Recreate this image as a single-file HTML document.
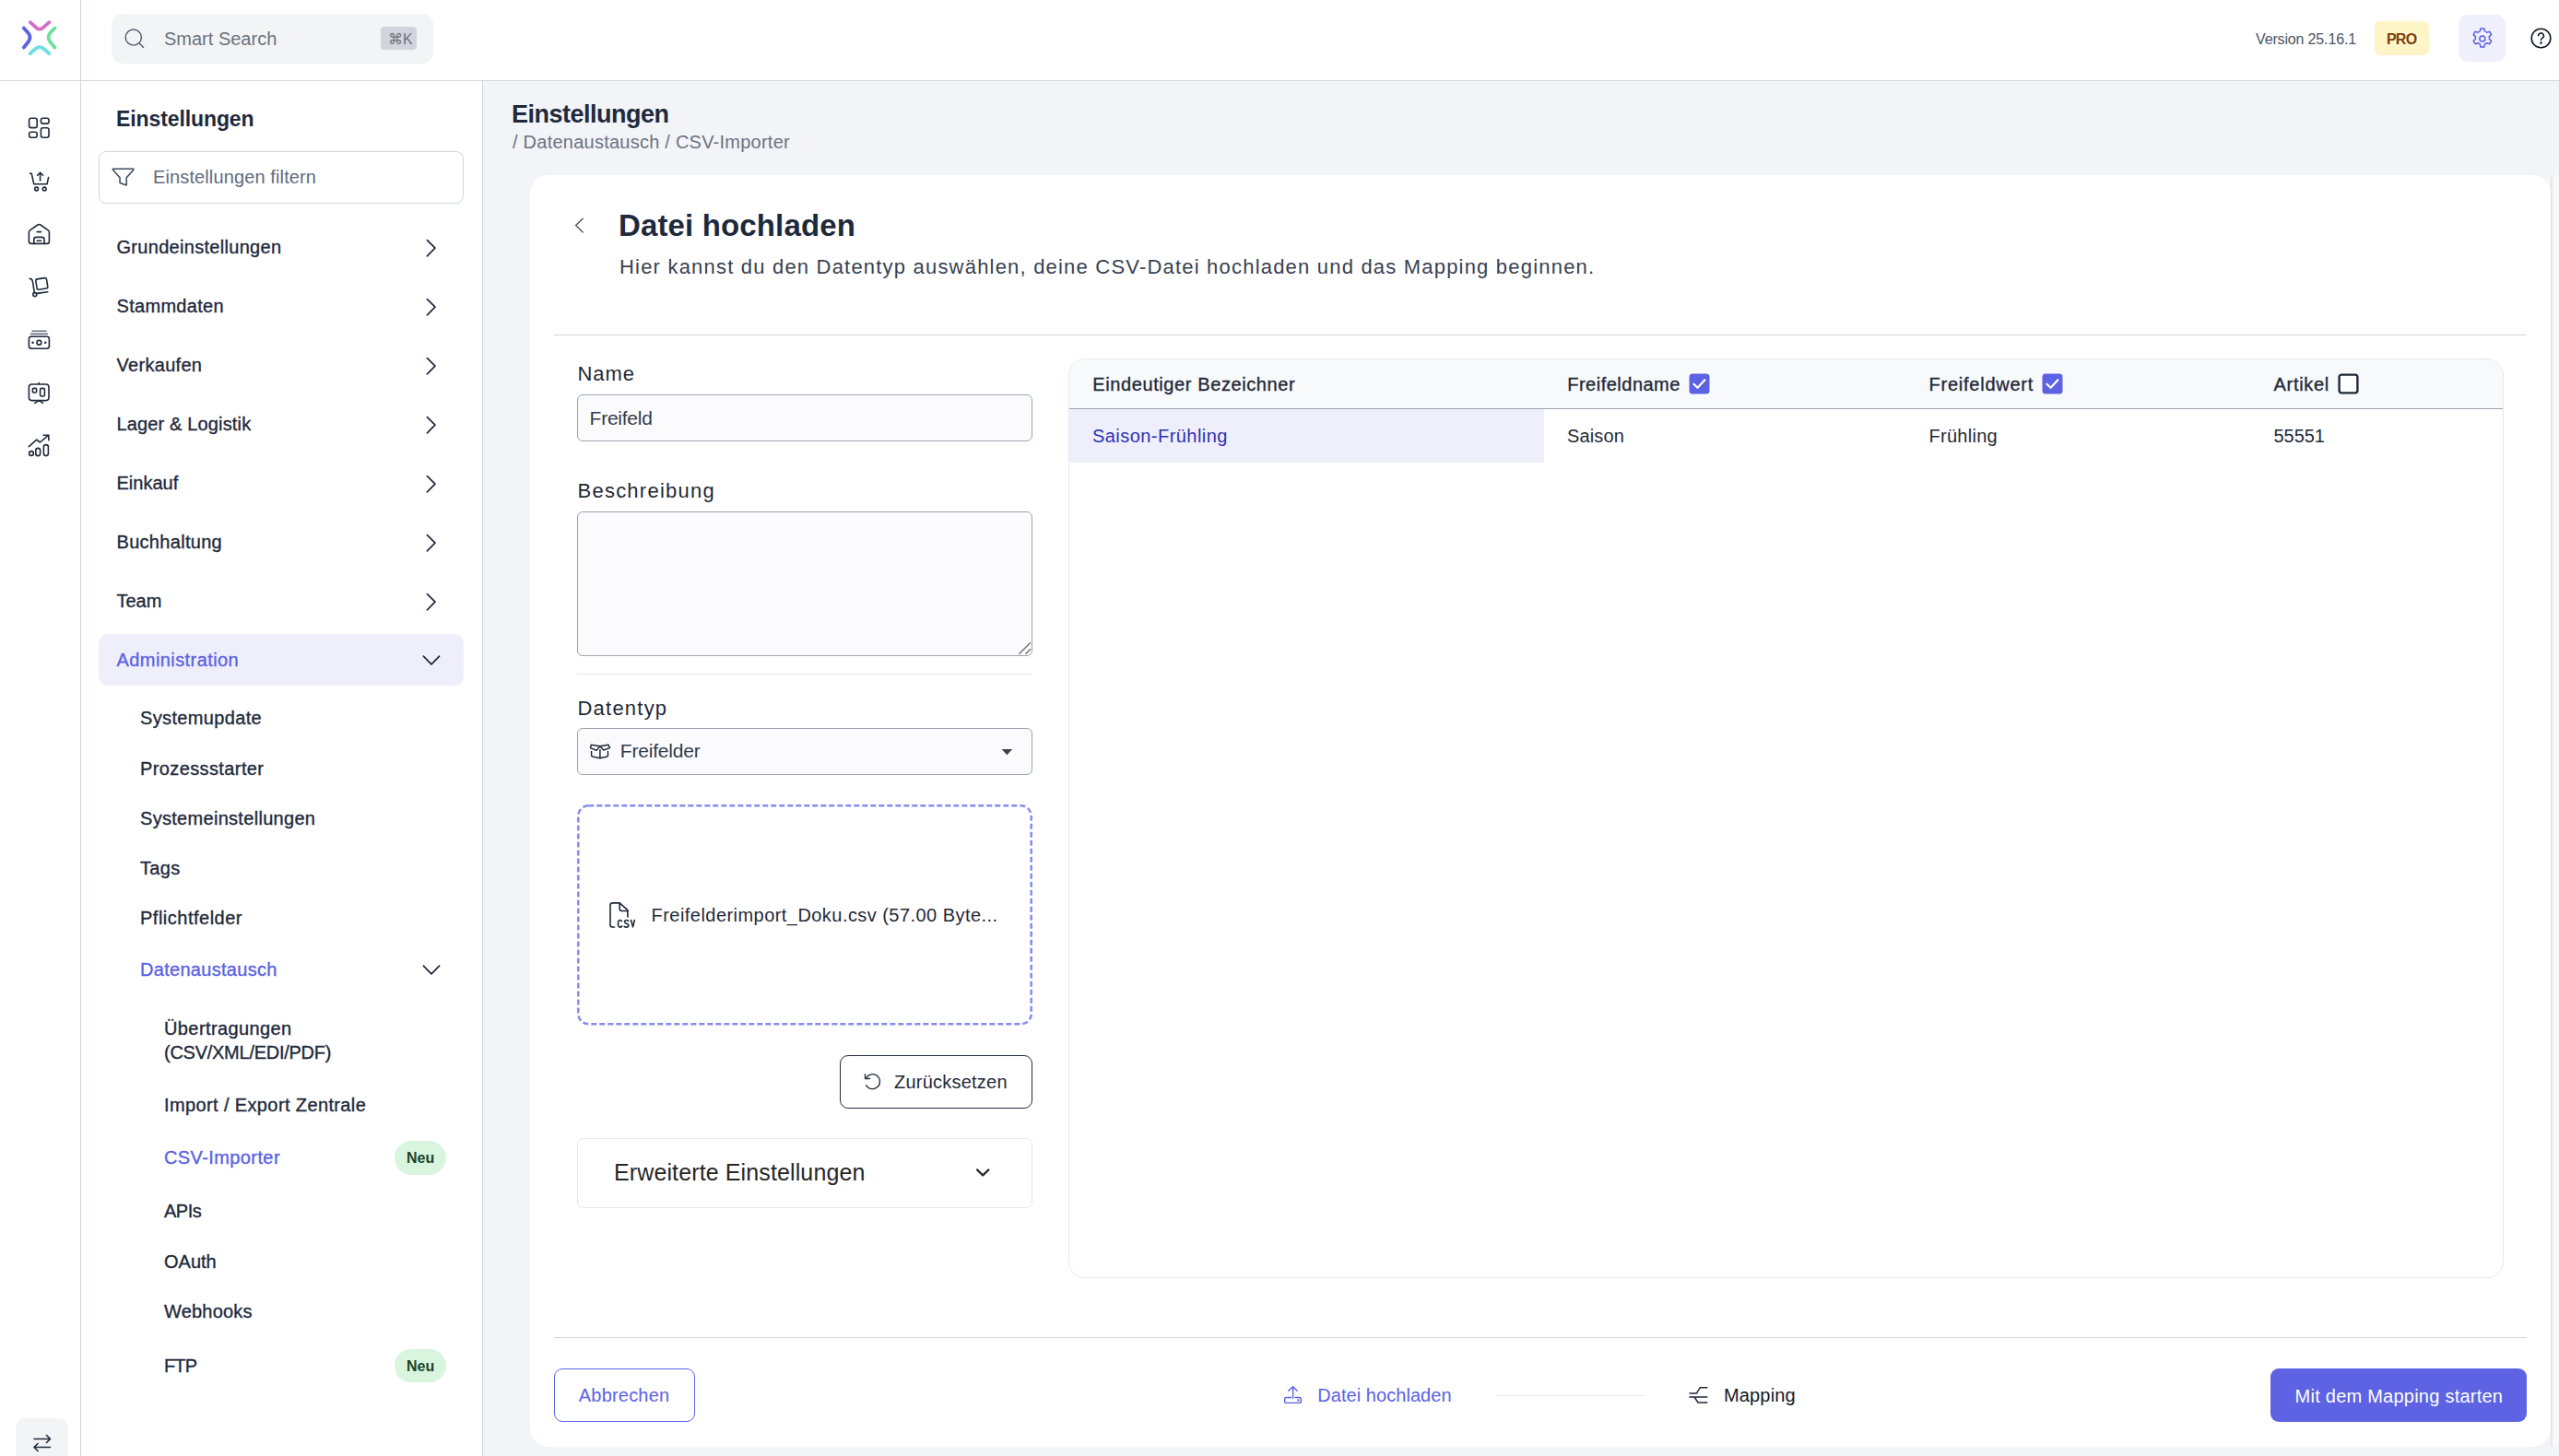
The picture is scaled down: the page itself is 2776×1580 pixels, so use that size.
<!DOCTYPE html>
<html lang="de">
<head>
<meta charset="utf-8">
<title>Datei hochladen</title>
<style>
*{box-sizing:border-box;margin:0;padding:0}
html,body{width:2776px;height:1580px;overflow:hidden}
body{position:relative;background:#f3f4f8;font-family:"Liberation Sans",sans-serif;color:#1e293b}
.a{position:absolute}
.t{position:absolute;white-space:nowrap;line-height:1}
.med{-webkit-text-stroke:0.35px currentColor}
svg{position:absolute;overflow:visible}
</style>
</head>
<body>

<!-- ===== Header ===== -->
<div class="a" style="left:0;top:0;width:2776px;height:87px;background:#fff"></div>
<div class="a" style="left:0;top:87px;width:2776px;height:1px;background:#d1d5db"></div>
<!-- logo -->
<svg style="left:0;top:0" width="87" height="87" viewBox="0 0 87 87" fill="none" stroke-width="3.8" stroke-linecap="round">
  <path d="M32.8 24.2 Q38 29 40 30.6 Q43 32.6 46 30.6 Q48 29 53.4 24.2" stroke="#d66fc3"/>
  <path d="M25.8 30.5 Q29 34 31 36.2 Q34 40.6 31 45 Q29 47.5 25.8 51.5" stroke="#5b62e3"/>
  <path d="M59.4 30.5 Q56 34 54 36.2 Q51.2 40.6 54 45 Q56 47.5 59.4 51.5" stroke="#6ce09c"/>
  <path d="M32.6 58.2 Q38 53 40 52 Q43 50.2 46 52 Q48 53 53.4 58.2" stroke="#6de0e0"/>
</svg>
<!-- search -->
<div class="a" style="left:121px;top:15px;width:349px;height:54px;background:#f3f4f6;border-radius:12px"></div>
<svg style="left:135px;top:31px" width="23" height="23" viewBox="0 0 23 23" fill="none" stroke="#525c6b" stroke-width="1.45" stroke-linecap="round">
  <circle cx="9.8" cy="9.5" r="8.6"/><path d="M16 15.8 L20.6 20.6"/>
</svg>
<div class="t" style="left:178px;top:31.7px;font-size:20px;color:#6b7280">Smart Search</div>
<div class="a" style="left:413px;top:29px;width:39px;height:25px;background:#d1d5db;border-radius:4px"></div>
<div class="t" style="left:420.5px;top:34.6px;font-size:16px;color:#6b7280;letter-spacing:0.6px">⌘K</div>
<!-- right header -->
<div class="t" style="left:2447px;top:35.2px;font-size:16px;color:#4b5563;letter-spacing:-0.15px">Version 25.16.1</div>
<div class="a" style="left:2576px;top:23px;width:59px;height:37px;background:#fef5c6;border-radius:6px"></div>
<div class="t" style="left:2589px;top:35.2px;font-size:16px;color:#7a3e10;font-weight:700;letter-spacing:-0.8px">PRO</div>
<div class="a" style="left:2667px;top:16px;width:51px;height:51px;background:#eff0fc;border-radius:10px"></div>
<svg style="left:2678.5px;top:27.7px" width="27.8" height="27.8" viewBox="0 0 24 24" fill="none" stroke="#5b62e3" stroke-width="1.3" stroke-linejoin="round">
  <path d="M10.3 2.5 h3.4 l.5 2.6 a7.5 7.5 0 0 1 2 1.15 l2.5-.9 1.7 2.95 -2 1.75 a7.5 7.5 0 0 1 0 2.3 l2 1.75 -1.7 2.95 -2.5-.9 a7.5 7.5 0 0 1 -2 1.15 l-.5 2.6 h-3.4 l-.5-2.6 a7.5 7.5 0 0 1 -2-1.15 l-2.5.9 -1.7-2.95 2-1.75 a7.5 7.5 0 0 1 0-2.3 l-2-1.75 1.7-2.95 2.5.9 a7.5 7.5 0 0 1 2-1.15 z"/>
  <circle cx="12" cy="12" r="2.6"/>
</svg>
<svg style="left:2745px;top:30px" width="23" height="23" viewBox="0 0 23 23" fill="none" stroke="#111827" stroke-width="1.6" stroke-linecap="round">
  <circle cx="11.5" cy="11.5" r="10.3"/><path d="M8.6 8.8 a2.9 2.9 0 1 1 4.2 2.6 c-.9.5-1.3 1-1.3 2"/><circle cx="11.5" cy="16.6" r=".5" fill="#111827"/>
</svg>

<!-- ===== Left rail ===== -->
<div class="a" style="left:0;top:88px;width:87px;height:1492px;background:#fff"></div>
<div class="a" style="left:87px;top:0;width:1px;height:1580px;background:#d1d5db"></div>
<svg style="left:0;top:88px" width="87" height="1492" viewBox="0 88 87 1492" fill="none" stroke="#1e293b" stroke-width="1.6" stroke-linecap="round" stroke-linejoin="round">
  <!-- dashboard -->
  <rect x="31.6" y="128.2" width="8.6" height="10.4" rx="2.2"/>
  <rect x="44.4" y="128.2" width="8.6" height="5.9" rx="2.2"/>
  <rect x="31.6" y="143.2" width="8.6" height="6.1" rx="2.2"/>
  <rect x="44.4" y="138.8" width="8.6" height="10.5" rx="2.2"/>
  <!-- cart upload -->
  <path d="M32.4 188.2 h1.8 l2.6 11.6 h14.2 l1.6-7.2"/>
  <path d="M43.6 196 v-8.6 M40.6 190.2 l3-3 3 3"/>
  <circle cx="39.6" cy="205" r="1.9"/><circle cx="48.2" cy="205" r="1.9"/>
  <!-- warehouse -->
  <path d="M31.4 262 V251.8 a2.4 2.4 0 0 1 1.1-2 l8.4-5.8 a2.6 2.6 0 0 1 3 0 l8.4 5.8 a2.4 2.4 0 0 1 1.1 2 V262 a2.4 2.4 0 0 1-2.4 2.4 h-17.2 a2.4 2.4 0 0 1-2.4-2.4z"/>
  <path d="M36.8 264.4 v-4.4 a2.6 2.6 0 0 1 2.6-2.6 h6 a2.6 2.6 0 0 1 2.6 2.6 v4.4 M40.2 261.2 h4.4 M40.2 251.6 h4.4"/>
  <!-- trolley -->
  <path d="M32.2 302.4 q2.6 0 3.2 3 l2 12.4 M40.4 318.4 l11.4-1.6"/>
  <circle cx="37.8" cy="319.6" r="2"/>
  <rect x="39.4" y="302.2" width="11.8" height="11.5" rx="1.8" transform="rotate(-9 45.3 308)"/>
  <!-- money -->
  <path d="M35 359.2 h15 M33.6 362.4 h17.8" stroke="#6b7280"/>
  <rect x="31.4" y="365.2" width="22" height="13" rx="2.6"/>
  <circle cx="42.4" cy="371.7" r="2.4"/>
  <circle cx="35.6" cy="371.7" r=".5" fill="#1e293b"/><circle cx="49.2" cy="371.7" r=".5" fill="#1e293b"/>
  <!-- kiosk -->
  <rect x="31.4" y="417" width="21.6" height="17.6" rx="3"/>
  <path d="M42.2 416.2 v-.6"/>
  <rect x="35.4" y="421.4" width="4.2" height="4.6" rx="1"/>
  <rect x="43.6" y="421.4" width="4.8" height="8.6" rx="1.6"/>
  <path d="M37.8 437.4 l4.4-2.8 4.4 2.8"/>
  <!-- chart -->
  <path d="M31.2 484.6 l8.6-7.4 3.6 2.8 9.4-7.8 M47.2 472.2 h5.6 v5.6"/>
  <circle cx="34" cy="492" r="2.4"/>
  <rect x="38.8" y="486.4" width="4.8" height="8.2" rx="2.4"/>
  <rect x="47.4" y="482.6" width="5" height="12" rx="2.5"/>
</svg>
<!-- bottom toggle -->
<div class="a" style="left:17px;top:1539px;width:57px;height:60px;background:#f3f4f6;border-radius:10px"></div>
<svg style="left:35px;top:1555px" width="22" height="22" viewBox="0 0 22 22" fill="none" stroke="#1e293b" stroke-width="1.6" stroke-linecap="round" stroke-linejoin="round">
  <path d="M2 6.5 h17.5 M15.5 2.5 l4 4 -4 4 M19.5 15.5 h-17.5 M6 11.5 l-4 4 4 4"/>
</svg>

<!-- ===== Settings sidebar ===== -->
<div class="a" style="left:88px;top:88px;width:435px;height:1492px;background:#fff"></div>
<div class="a" style="left:523px;top:88px;width:1px;height:1492px;background:#d1d5db"></div>
<div class="t" style="left:126px;top:117.9px;font-size:23px;font-weight:700;color:#1e293b;letter-spacing:-0.1px">Einstellungen</div>
<div class="a" style="left:107px;top:164px;width:396px;height:57px;border:1px solid #d1d5db;border-radius:8px;background:#fff"></div>
<svg style="left:121.5px;top:180.5px" width="24" height="22" viewBox="0 0 24 22" fill="none" stroke="#3f4a5c" stroke-width="1.55" stroke-linejoin="round">
  <path d="M1.6 2.2 h20.8 a.6.6 0 0 1 .45 1 l-7.6 8.6 v8.2 l-7.2 -2.6 v-5.6 l-7.6-8.6 a.6.6 0 0 1 .45-1z"/>
</svg>
<div class="t" style="left:166px;top:181.8px;font-size:20px;color:#5f6b7d;letter-spacing:0.12px">Einstellungen filtern</div>
<!-- active admin bg -->
<div class="a" style="left:107px;top:688px;width:396px;height:56px;background:#efeffb;border-radius:10px"></div>
<div style="position:absolute;left:0;top:0;font-size:20px;letter-spacing:0.3px;color:#1e293b">
  <div class="t med" style="left:126.5px;top:257.8px">Grundeinstellungen</div>
  <div class="t med" style="left:126.5px;top:321.8px">Stammdaten</div>
  <div class="t med" style="left:126.5px;top:385.8px">Verkaufen</div>
  <div class="t med" style="left:126.5px;top:449.8px;letter-spacing:0.15px">Lager &amp; Logistik</div>
  <div class="t med" style="left:126.5px;top:513.8px;letter-spacing:0">Einkauf</div>
  <div class="t med" style="left:126.5px;top:577.8px">Buchhaltung</div>
  <div class="t med" style="left:126.5px;top:641.8px;letter-spacing:0">Team</div>
  <div class="t med" style="left:126.5px;top:705.8px;color:#5b62e3;letter-spacing:0.42px">Administration</div>
  <div class="t med" style="left:152px;top:769.1px;letter-spacing:0.35px">Systemupdate</div>
  <div class="t med" style="left:152px;top:823.5px;letter-spacing:0.39px">Prozessstarter</div>
  <div class="t med" style="left:152px;top:877.6px">Systemeinstellungen</div>
  <div class="t med" style="left:152px;top:931.8px">Tags</div>
  <div class="t med" style="left:152px;top:985.8px;letter-spacing:0.5px">Pflichtfelder</div>
  <div class="t med" style="left:152px;top:1042.3px;color:#5b62e3">Datenaustausch</div>
  <div class="t med" style="left:178px;top:1105.8px;letter-spacing:0.4px">Übertragungen</div>
  <div class="t med" style="left:178px;top:1132.3px;letter-spacing:-0.26px">(CSV/XML/EDI/PDF)</div>
  <div class="t med" style="left:178px;top:1188.6px;letter-spacing:0.38px">Import / Export Zentrale</div>
  <div class="t med" style="left:178px;top:1245.5px;color:#5b62e3;letter-spacing:0.4px">CSV-Importer</div>
  <div class="t med" style="left:178px;top:1303.8px;letter-spacing:-0.5px">APIs</div>
  <div class="t med" style="left:178px;top:1358.7px;letter-spacing:0">OAuth</div>
  <div class="t med" style="left:178px;top:1413.1px;letter-spacing:0.2px">Webhooks</div>
  <div class="t med" style="left:178px;top:1472.1px;letter-spacing:-0.9px">FTP</div>
</div>
<svg style="left:0;top:0" width="523" height="1580" viewBox="0 0 523 1580" fill="none" stroke="#1e293b" stroke-width="1.7" stroke-linecap="round" stroke-linejoin="round">
  <path d="M463.4 260.6 l8.6 8.6 -8.6 8.6"/>
  <path d="M463.4 324.6 l8.6 8.6 -8.6 8.6"/>
  <path d="M463.4 388.6 l8.6 8.6 -8.6 8.6"/>
  <path d="M463.4 452.6 l8.6 8.6 -8.6 8.6"/>
  <path d="M463.4 516.6 l8.6 8.6 -8.6 8.6"/>
  <path d="M463.4 580.6 l8.6 8.6 -8.6 8.6"/>
  <path d="M463.4 644.6 l8.6 8.6 -8.6 8.6"/>
  <path d="M459.4 712.2 l8.6 8.6 8.6-8.6"/>
  <path d="M459.4 1048.2 l8.6 8.6 8.6-8.6"/>
</svg>
<div class="a" style="left:428px;top:1238px;width:55.5px;height:37px;background:#d9f5de;border-radius:18.5px"></div>
<div class="t" style="left:441px;top:1249.4px;font-size:16px;font-weight:700;color:#17452b">Neu</div>
<div class="a" style="left:428px;top:1464px;width:55.5px;height:35.5px;background:#d9f5de;border-radius:18px"></div>
<div class="t" style="left:441px;top:1474.6px;font-size:16px;font-weight:700;color:#17452b">Neu</div>

<!-- ===== Card ===== -->
<div class="a" style="left:575px;top:190px;width:2192px;height:1380px;background:#fff;border-radius:20px"></div>
<div class="a" style="left:2767px;top:190px;width:9px;height:1380px;background:#f9f9f9;border-left:2px solid #e6e6e6"></div>

<!-- page heading -->
<div class="t" style="left:555px;top:111.1px;font-size:27px;font-weight:700;color:#1e293b;letter-spacing:-0.5px">Einstellungen</div>
<div class="t" style="left:556px;top:144.1px;font-size:20px;color:#6b7280;letter-spacing:0.24px">/ Datenaustausch / CSV-Importer</div>

<!-- card header -->
<svg style="left:620px;top:234px" width="16" height="21" viewBox="0 0 16 21" fill="none" stroke="#4b5563" stroke-width="1.4" stroke-linecap="round" stroke-linejoin="round">
  <path d="M12.2 3.2 L4.6 10.6 L12.2 18"/>
</svg>
<div class="t" style="left:671px;top:228.1px;font-size:33px;font-weight:700;color:#1e293b;letter-spacing:0.14px">Datei hochladen</div>
<div class="t" style="left:672px;top:278.6px;font-size:22px;color:#374151;letter-spacing:1.2px">Hier kannst du den Datentyp auswählen, deine CSV-Datei hochladen und das Mapping beginnen.</div>
<div class="a" style="left:601px;top:363px;width:2140px;height:1px;background:#d1d5db"></div>

<!-- ===== form ===== -->
<div class="t" style="left:626.5px;top:394.7px;font-size:22px;color:#1f2937;letter-spacing:0.9px">Name</div>
<div class="a" style="left:626px;top:428px;width:494px;height:50.6px;border:1px solid #9ca3af;border-radius:6px;background:#fbfbfd"></div>
<div class="t" style="left:639.6px;top:443.2px;font-size:21px;color:#333c4b;letter-spacing:-0.25px">Freifeld</div>

<div class="t" style="left:626.5px;top:522.4px;font-size:22px;color:#1f2937;letter-spacing:1.24px">Beschreibung</div>
<div class="a" style="left:626px;top:555px;width:494px;height:157px;border:1px solid #9ca3af;border-radius:6px;background:#fbfbfd"></div>
<svg style="left:1104px;top:696px" width="16" height="16" viewBox="0 0 16 16" fill="none" stroke="#6b6b6b" stroke-width="1.3" stroke-linecap="butt">
  <path d="M1.4 13.8 L14 1.2 M8.4 13.8 L14 8.2"/>
</svg>
<div class="a" style="left:626px;top:731px;width:494px;height:1px;background:#e5e7eb"></div>

<div class="t" style="left:626.5px;top:758.3px;font-size:22px;color:#1f2937;letter-spacing:1.22px">Datentyp</div>
<div class="a" style="left:626px;top:790px;width:494px;height:50.5px;border:1px solid #9ca3af;border-radius:6px;background:#fbfbfd"></div>
<svg style="left:639px;top:805px" width="24" height="20" viewBox="0 0 24 20" fill="none" stroke="#1f2937" stroke-width="1.5" stroke-linejoin="round" stroke-linecap="round">
  <path d="M1.4 6.6 L2.4 3.2 L11.9 4.8 L20.9 3.2 L22.6 6.6 L15.8 9 L11.9 4.8 L8 9.2 Z"/>
  <path d="M2.6 10.4 V15 Q2.8 15.6 3.6 15.9 L11.9 17.7 L19.6 16 Q20.4 15.7 20.5 15 V10.4 M11.9 8.8 V17.7"/>
</svg>
<div class="t" style="left:672.8px;top:804.4px;font-size:21px;color:#333c4b;letter-spacing:-0.2px">Freifelder</div>
<svg style="left:1085px;top:811px" width="14" height="10" viewBox="0 0 14 10">
  <path d="M1.6 1.9 H13.2 L7.4 8.2 Z" fill="#3a4350"/>
</svg>

<!-- dropzone -->
<svg style="left:626px;top:873px" width="494" height="239.5" viewBox="0 0 494 239.5">
  <rect x="1.3" y="1.3" width="491.4" height="236.9" rx="11" fill="#fff" stroke="#868cee" stroke-width="2.5" stroke-dasharray="6 3"/>
</svg>
<svg style="left:650px;top:970px" width="50" height="45" viewBox="0 0 50 45" fill="none" stroke="#1f2937" stroke-width="1.6" stroke-linejoin="round" stroke-linecap="round">
  <path d="M16.6 36 H14.6 A2.6 2.6 0 0 1 12 33.4 V12.5 A2.6 2.6 0 0 1 14.6 9.9 H22.2 L30.9 17.6 V25"/>
  <path d="M22.2 9.9 V16 A2.4 2.4 0 0 0 24.4 18.5 H30.9"/>
  <path d="M24.6 29.6 Q24 28.5 22.6 28.5 Q20.5 28.5 20.5 32.3 Q20.5 36.1 22.6 36.1 Q24 36.1 24.6 35"/>
  <path d="M31.8 29.3 Q31 28.5 29.6 28.5 Q27.6 28.5 27.6 30.3 Q27.6 31.8 29.6 32.2 Q31.8 32.6 31.8 34.3 Q31.8 36.1 29.5 36.1 Q28.1 36.1 27.2 35.3"/>
  <path d="M34.6 28.5 L36.5 35.9 L38.4 28.5"/>
</svg>
<div class="t" style="left:706.6px;top:982.7px;font-size:20px;color:#1f2937;letter-spacing:0.45px">Freifelderimport_Doku.csv (57.00 Byte...</div>

<!-- reset button -->
<div class="a" style="left:911px;top:1145px;width:209px;height:57.5px;border:1.5px solid #1f2937;border-radius:9px;background:#fff"></div>
<svg style="left:935px;top:1162px" width="24" height="24" viewBox="0 0 24 24" fill="none" stroke="#1f2937" stroke-width="1.3" stroke-linecap="round" stroke-linejoin="round">
  <path d="M3.5 3.6 V8.5 H8.6"/>
  <path d="M4.6 7.6 A8 8 0 1 1 4.6 15.8"/>
</svg>
<div class="t" style="left:970px;top:1164px;font-size:20px;color:#1f2937;letter-spacing:0.23px">Zurücksetzen</div>

<!-- erweiterte -->
<div class="a" style="left:626px;top:1235px;width:494px;height:76px;border:1px solid #e4e6ee;border-radius:7px;background:#fff"></div>
<div class="t" style="left:666px;top:1259.8px;font-size:25px;color:#262626;letter-spacing:0.12px">Erweiterte Einstellungen</div>
<svg style="left:1056px;top:1266px" width="20" height="13" viewBox="0 0 20 13" fill="none" stroke="#262626" stroke-width="2.2" stroke-linecap="round" stroke-linejoin="round">
  <path d="M4 3.4 L10.2 9.4 L16.4 3.4"/>
</svg>

<!-- ===== table ===== -->
<div class="a" style="left:1158.5px;top:389px;width:1557px;height:998px;border:1px solid #e6e8ee;border-radius:18px;background:#fff;overflow:hidden">
  <div class="a" style="left:0;top:0;width:1555px;height:54px;background:#f8f9fb;border-bottom:1px solid #9ca3af"></div>
  <div class="a" style="left:0;top:54px;width:515.5px;height:57.5px;background:#eeeffa"></div>
</div>
<div style="position:absolute;left:0;top:0;font-size:20px;color:#1f2937">
  <div class="t med" style="left:1185.3px;top:406.9px;letter-spacing:0.6px">Eindeutiger Bezeichner</div>
  <div class="t med" style="left:1700.2px;top:406.9px;letter-spacing:0.5px">Freifeldname</div>
  <div class="t med" style="left:2092.6px;top:406.9px;letter-spacing:0.75px">Freifeldwert</div>
  <div class="t med" style="left:2466.6px;top:406.9px;letter-spacing:0.68px">Artikel</div>
  <div class="t" style="left:1185px;top:462.5px;letter-spacing:0.45px;color:#2e2fb5">Saison-Frühling</div>
  <div class="t" style="left:1700px;top:462.5px;letter-spacing:0.14px">Saison</div>
  <div class="t" style="left:2092.6px;top:462.5px;letter-spacing:0.26px">Frühling</div>
  <div class="t" style="left:2466.6px;top:462.5px;letter-spacing:-0.1px">55551</div>
</div>
<svg style="left:1832px;top:405px" width="23" height="23" viewBox="0 0 23 23">
  <rect x="0.5" y="0.5" width="22" height="22" rx="3.5" fill="#5d62e3"/>
  <path d="M5.4 11.8 L9.6 15.8 L17.4 7.2" fill="none" stroke="#fff" stroke-width="2.2" stroke-linecap="round" stroke-linejoin="round"/>
</svg>
<svg style="left:2215px;top:405px" width="23" height="23" viewBox="0 0 23 23">
  <rect x="0.5" y="0.5" width="22" height="22" rx="3.5" fill="#5d62e3"/>
  <path d="M5.4 11.8 L9.6 15.8 L17.4 7.2" fill="none" stroke="#fff" stroke-width="2.2" stroke-linecap="round" stroke-linejoin="round"/>
</svg>
<svg style="left:2536px;top:405px" width="23" height="23" viewBox="0 0 23 23">
  <rect x="1.6" y="1.6" width="19.8" height="19.8" rx="2.6" fill="#fff" stroke="#1f2937" stroke-width="2.4"/>
</svg>

<!-- ===== footer ===== -->
<div class="a" style="left:601px;top:1451px;width:2140px;height:1px;background:#d1d5db"></div>
<div class="a" style="left:601px;top:1485px;width:153px;height:57.5px;border:1.5px solid #5b62e3;border-radius:9px;background:#fff"></div>
<div class="t" style="left:627.8px;top:1504.1px;font-size:20px;color:#5b62e3;letter-spacing:0.2px">Abbrechen</div>

<svg style="left:1391px;top:1502px" width="24" height="24" viewBox="0 0 24 24" fill="none" stroke="#5b62e3" stroke-width="1.4" stroke-linecap="round" stroke-linejoin="round">
  <path d="M11.6 3.2 V15.4 M6.8 7.2 L11.6 2.8 L16.2 7.2"/>
  <path d="M9.4 14.5 H4.6 A2 2 0 0 0 2.6 16.5 V18.4 A2 2 0 0 0 4.6 20.4 H18.4 A2 2 0 0 0 20.4 18.4 V16.5 A2 2 0 0 0 18.4 14.5 H14"/>
  <circle cx="17.5" cy="17.4" r=".5" fill="#5b62e3"/>
</svg>
<div class="t" style="left:1429.3px;top:1504.4px;font-size:20px;color:#5b62e3;letter-spacing:0.05px">Datei hochladen</div>
<div class="a" style="left:1624px;top:1514px;width:160px;height:1px;background:#e5e7eb"></div>
<svg style="left:1830px;top:1502px" width="25" height="24" viewBox="0 0 25 24" fill="none" stroke="#1f2937" stroke-width="1.5" stroke-linecap="butt" stroke-linejoin="miter">
  <path d="M2.5 10.1 H10.4 L14.3 3.7 H22.3 M2.5 14 H22.3 M8.2 14 L11.9 20 H22.3"/>
</svg>
<div class="t" style="left:1870px;top:1504.4px;font-size:20px;color:#111827;letter-spacing:0.15px">Mapping</div>

<div class="a" style="left:2463px;top:1485px;width:278px;height:58px;background:#5d63e3;border-radius:9px"></div>
<div class="t" style="left:2489.6px;top:1504.5px;font-size:20px;color:#fff;letter-spacing:0.24px">Mit dem Mapping starten</div>

</body>
</html>
